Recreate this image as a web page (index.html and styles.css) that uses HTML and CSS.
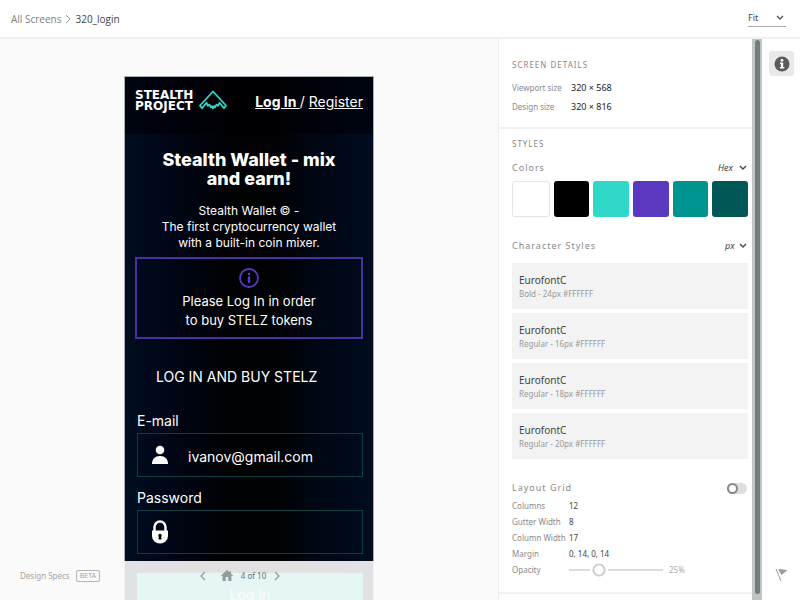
FILE: index.html
```html
<!DOCTYPE html>
<html lang="en">
<head>
<meta charset="utf-8">
<title>320_login</title>
<link rel="stylesheet" href="styles.css">
</head>
<body>
<header class="topbar">
  <nav class="crumbs">
    <a href="#">All Screens</a>
    <svg width="6" height="10" viewBox="0 0 6 10"><path d="M1 1l4 4-4 4" fill="none" stroke="#999"/></svg>
    <span class="current">320_login</span>
  </nav>
  <span class="picker fit"><select aria-label="Zoom"><option>Fit</option></select><svg class="chev" width="8" height="6" viewBox="0 0 8 6"><path d="M1 1l3 3 3-3" fill="none" stroke="#555" stroke-width="1.4"/></svg></span>
</header>
<div class="workspace">
  <main class="canvas">
    <article class="phone">
      <header class="phone-head">
        <a class="brand" href="#">
          <span class="name"><span>STEALTH</span><span>PROJECT</span></span>
          <svg width="28" height="20" viewBox="0 0 28 20" fill="none" stroke="#2fd8c8" stroke-width="1.8" stroke-linejoin="round"><path d="M14 1.500L1 15.500l2 2.800 4.500-5.500 1.500 3 1.500-1.200 1.500 2.700 1-1.200 1 2.200 1-2.200 1 1.200 1.500-2.700 1.500 1.200 1.500-3 4.500 5.500 2-2.800z"/></svg>
        </a>
        <p class="auth"><a class="active" href="#">Log In&nbsp;</a>/ <a href="#">Register</a></p>
      </header>
      <h1>Stealth Wallet - mix<br>and earn!</h1>
      <p class="lead">Stealth Wallet © -<br>The first cryptocurrency wallet<br>with a built-in coin mixer.</p>
      <div class="notice">
        <svg width="20" height="20" viewBox="0 0 20 20"><circle cx="10" cy="10" r="9" fill="none" stroke="#5a38c0" stroke-width="1.800"/><circle cx="10" cy="6" r="1.300" fill="#5a38c0"/><path d="M10 9.500v4.500" stroke="#5a38c0" stroke-width="2.400" stroke-linecap="round"/></svg>
        <p>Please Log In in order<br>to buy STELZ tokens</p>
      </div>
      <h2>LOG IN AND BUY STELZ</h2>
      <form class="login">
        <label for="email">E-mail</label>
        <div class="field">
          <svg width="16" height="20" viewBox="0 0 16 20" fill="#fff"><circle cx="8" cy="5" r="4.300"/><path d="M0 19c0-5 3-8 8-8s8 3 8 8z"/></svg>
          <input id="email" type="text" value="ivanov@gmail.com">
        </div>
        <label for="password">Password</label>
        <div class="field">
          <svg width="16" height="24" viewBox="0 0 16 24"><path d="M2.500 12V7a5.500 5.500 0 0 1 11 0v5" fill="none" stroke="#fff" stroke-width="2.400"/><path d="M0 10.500h16V16a8 7.500 0 0 1-16 0z" fill="#fff"/><circle cx="8" cy="15.500" r="1.700"/><path d="M7.200 15h1.600l.8 4.500H6.400z"/></svg>
          <input id="password" type="password">
        </div>
        <button class="submit" type="button">Log In</button>
      </form>
    </article>
    <footer class="dock">
      <p class="specs">Design Specs <span>BETA</span></p>
      <nav class="pager">
        <button aria-label="Previous"><svg width="6" height="10" viewBox="0 0 6 10"><path d="M5 1L1 5l4 4" fill="none" stroke="#949b9e" stroke-width="1.300"/></svg></button>
        <button class="home" aria-label="Home"><svg width="12" height="11" viewBox="0 0 12 11"><path d="M6 0l2.500 2.300V1.200H10v2.500l2 1.900-.6.700-1-.7V11H7.300V7H4.700v4H1.600V5.600l-1 .7L0 5.600z" fill="#949b9e"/></svg></button>
        <span>4 of 10</span>
        <button aria-label="Next"><svg width="6" height="10" viewBox="0 0 6 10"><path d="M1 1l4 4-4 4" fill="none" stroke="#949b9e" stroke-width="1.300"/></svg></button>
      </nav>
    </footer>
  </main>
  <aside class="panel">
    <section class="details">
      <h3>SCREEN DETAILS</h3>
      <dl>
        <dt>Viewport size</dt><dd>320 × 568</dd>
        <dt>Design size</dt><dd>320 × 816</dd>
      </dl>
    </section>
    <section class="styles">
      <h3>STYLES</h3>
      <div class="row">
        <h4>Colors</h4>
        <span class="picker"><select aria-label="Color format"><option>Hex</option></select><svg class="chev" width="8" height="6" viewBox="0 0 8 6"><path d="M1 1l3 3 3-3" fill="none" stroke="#444" stroke-width="1.400"/></svg></span>
      </div>
      <div class="swatches">
        <button class="white" aria-label="White"></button>
        <button class="black" aria-label="Black"></button>
        <button class="mint" aria-label="Mint"></button>
        <button class="violet" aria-label="Violet"></button>
        <button class="teal" aria-label="Teal"></button>
        <button class="pine" aria-label="Pine"></button>
      </div>
      <div class="row">
        <h4>Character Styles</h4>
        <span class="picker px"><select aria-label="Unit"><option>px</option></select><svg class="chev" width="8" height="6" viewBox="0 0 8 6"><path d="M1 1l3 3 3-3" fill="none" stroke="#444" stroke-width="1.400"/></svg></span>
      </div>
      <ul class="fonts">
        <li><strong>EurofontC</strong><span>Bold - 24px #FFFFFF</span></li>
        <li><strong>EurofontC</strong><span>Regular - 16px #FFFFFF</span></li>
        <li><strong>EurofontC</strong><span>Regular - 18px #FFFFFF</span></li>
        <li><strong>EurofontC</strong><span>Regular - 20px #FFFFFF</span></li>
      </ul>
      <div class="row">
        <h4><label for="grid">Layout Grid</label></h4>
        <input class="toggle" id="grid" type="checkbox">
      </div>
      <dl class="grid-values">
        <dt>Columns</dt><dd>12</dd>
        <dt>Gutter Width</dt><dd>8</dd>
        <dt>Column Width</dt><dd>17</dd>
        <dt>Margin</dt><dd>0, 14, 0, 14</dd>
        <dt><label for="opacity">Opacity</label></dt><dd class="opacity"><input id="opacity" type="range" min="0" max="100" value="27"><span>25%</span></dd>
      </dl>
    </section>
  </aside>
  <div class="scroll"><div class="thumb"></div></div>
  <nav class="rail">
    <button class="info" aria-label="Info"><svg width="16" height="16" viewBox="0 0 16 16"><circle cx="8" cy="8" r="7.500" fill="#5b5b5b"/><circle cx="8" cy="4.300" r="1.400" fill="#fff"/><path d="M6 6.500h3.200v4.600h1.100v1.500H5.800v-1.500h1.100V8H6z" fill="#fff"/></svg></button>
    <button class="flag" aria-label="Report"><svg width="13" height="14" viewBox="0 0 13 14"><path d="M1 1l5 12" stroke="#999" fill="none"/><path d="M3 1l9.500 1-6 5z" fill="#999"/></svg></button>
  </nav>
</div>
</body>
</html>
```

FILE: styles.css
```css
* { box-sizing: border-box; }
body, h1, h2, h3, h4, p, dl, dd, ul { margin: 0; padding: 0; }
body {
  height: 100vh;
  display: flex;
  flex-direction: column;
  overflow: hidden;
  background: #fff;
  color: #444;
  font: 10px/16px "Noto Sans", sans-serif;
}
button { border: 0; padding: 0; background: none; font: inherit; display: flex; align-items: center; justify-content: center; }
a { color: inherit; text-decoration: none; }
svg { flex: none; display: block; }

.topbar { flex: none; height: 39px; border-bottom: 2px solid #f1f1f1; padding: 0 14px 0 11px; display: flex; align-items: center; justify-content: space-between; }
.crumbs { display: flex; align-items: center; gap: 4px; color: #808080; font: 10px/16px "Open Sans", sans-serif; }
.crumbs .current { color: #444; }
.picker { display: flex; align-items: center; position: relative; }
.picker select { appearance: none; border: 0; margin: 0; padding: 0; background: none; color: #444; font: italic 9px/16px "Noto Sans", sans-serif; width: 29px; }
.picker.px select { width: 22px; }
.picker .chev { pointer-events: none; position: absolute; right: 0; }
.picker.fit { border-bottom: 1px solid #aaa; }
.picker.fit select { width: 38px; font-style: normal; }
.picker.fit .chev { right: 2px; }

.workspace { flex: 1; min-height: 0; display: flex; }
.canvas { flex: 1; position: relative; overflow: hidden; background: #fafafa; padding-top: 37px; }
.phone {
  width: 250px;
  margin: 0 auto;
  border: 1px solid #a9aeb2;
  padding-bottom: 60px;
  color: #fff;
  background: linear-gradient(90deg, #000d20 0%, #000718 15%, #000103 42%, #000103 60%, #000714 78%, #000c20 100%);
  font: 12px/16px Inter, sans-serif;
}
.phone-head { height: 57px; padding: 0 10px; background: rgba(0, 0, 5, 0.6); display: flex; align-items: flex-start; justify-content: space-between; }
.brand { display: flex; gap: 4px; margin-top: 13px; font: 700 12px/11px "DejaVu Sans", sans-serif; }
.name { display: grid; width: 60px; }
.auth { margin-top: 17px; font-size: 14px; }
.auth a { text-decoration: underline; }
.auth .active { font-weight: 700; }
.phone h1 { margin-top: 16px; font-size: 18px; font-weight: 800; line-height: 19px; text-align: center; }
.lead { margin-top: 15px; text-align: center; }
.notice { margin: 6px 10px 0; height: 82px; border: 2px solid #4a30a0; display: flex; flex-direction: column; align-items: center; padding-top: 9px; }
.notice p { margin-top: 4px; font-size: 13px; line-height: 19px; text-align: center; }
.phone h2 { margin: 28px 20px 0 31px; font-size: 14px; line-height: 20px; font-weight: 400; }
.login { margin: 26px 10px 0 12px; display: flex; flex-direction: column; }
.login label { font-size: 14px; line-height: 16px; }
.field { height: 44px; margin: 4px 0 13px; border: 1px solid #0d3f42; display: flex; align-items: center; gap: 20px; padding: 0 14px; }
.field input { flex: 1; min-width: 0; border: 0; padding: 4px 0 0; background: none; color: #fff; font: 14px/20px Inter, sans-serif; }
.submit { height: 44px; margin-top: 6px; background: #2fd8c8; color: #fff; font: 14px/20px Inter, sans-serif; }

.dock { position: absolute; left: 0; right: 0; bottom: 0; height: 39px; background: rgba(250, 250, 250, 0.9); display: flex; align-items: center; justify-content: center; padding: 0 18px 10px 0; }
.specs { position: absolute; left: 20px; display: flex; align-items: center; gap: 6px; color: #a5a5a5; font-size: 8px; }
.specs span { border: 1px solid #b5b5b5; border-radius: 2px; padding: 0 3px; font-size: 7px; line-height: 10px; }
.pager { display: flex; align-items: center; gap: 8px; color: #687377; font-size: 8px; }
.pager .home { margin-left: 7px; }

.panel { flex: none; width: 254px; border-left: 1px solid #ededed; overflow: hidden; }
.panel section { padding-left: 13px; padding-right: 4px; border-bottom: 2px solid #f1f1f1; }
.panel .details { height: 90px; padding-top: 18px; }
.panel h3, .panel h4 { color: #888; font-size: 9px; line-height: 16px; font-weight: 400; letter-spacing: 1px; }
.panel h3 { font-size: 8px; }
.panel dl { display: grid; grid-template-columns: 57px 1fr; color: #444; font-size: 8px; }
.panel dt { color: #8a8a8a; white-space: nowrap; }
.panel .details dl { grid-template-columns: 59px 1fr; margin-top: 5px; line-height: 19px; }
.details dd { color: #222; font-size: 9px; }
.styles { height: 465px; padding-top: 7px; }
.row { display: flex; justify-content: space-between; align-items: center; padding-right: 1px; }
.styles h3 { margin-bottom: 8px; }
.swatches { display: flex; gap: 4px; margin: 5px 0 21px; }
.swatches button { flex: 1; height: 36px; border-radius: 3px; }
.swatches .white { border: 1px solid #e4e4e4; background: #fff; }
.swatches .black { background: #000; }
.swatches .mint { background: #2fd8c8; }
.swatches .violet { background: #5a38c0; }
.swatches .teal { background: #009491; }
.swatches .pine { background: #005756; }
.fonts { list-style: none; display: grid; gap: 4px; margin: 9px 0 21px; }
.fonts li { height: 46px; background: #f3f3f3; padding: 9px 7px 0; }
.fonts strong, .fonts span { display: block; font-weight: 400; }
.fonts strong { font-size: 10px; line-height: 16px; }
.fonts span { color: #999; font-size: 8px; line-height: 12px; }
.toggle { appearance: none; width: 20px; height: 11px; margin: 0; border-radius: 6px; background: #dedede; display: flex; align-items: center; }
.toggle::before { content: ""; box-sizing: border-box; width: 11px; height: 11px; border: 2px solid #888; border-radius: 50%; background: #fff; }
.grid-values { margin-top: 2px; }
.opacity { display: flex; align-items: center; gap: 6px; color: #aaa; }
.opacity input { appearance: none; width: 94px; height: 14px; margin: 0; background: linear-gradient(#ddd, #ddd) center / 100% 2px no-repeat; }
.opacity input::-webkit-slider-thumb { appearance: none; width: 18px; height: 14px; border: 0; background: radial-gradient(circle at center, #fff 4px, #d0d0d0 5px, #d0d0d0 6px, #fff 7px); }

.scroll { flex: none; width: 10px; background: #bfc4c4; padding: 1px 2px 6px 3px; display: flex; }
.thumb { flex: 1; border-radius: 3px; background: #727d7e; }
.rail { flex: none; width: 38px; padding: 12px 6px 18px 7px; display: flex; flex-direction: column; justify-content: space-between; align-items: center; }
.rail .info { width: 25px; height: 25px; border-radius: 3px; background: #e9e9e9; }
```
